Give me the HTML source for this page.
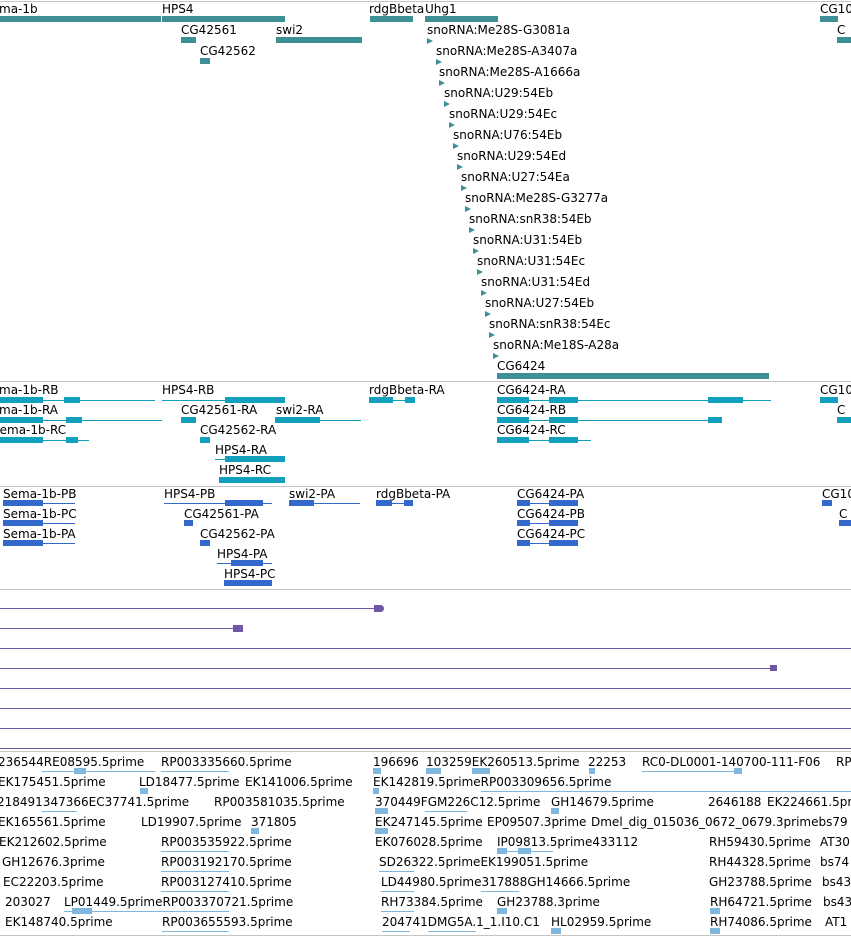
<!DOCTYPE html>
<html><head><meta charset="utf-8"><style>
body{margin:0;width:851px;height:937px;overflow:hidden;background:#fff;position:relative;font-family:"DejaVu Sans","Liberation Sans",sans-serif}
div{position:absolute}
.t{font-size:12px;line-height:12px;color:#000;white-space:nowrap}
.s{height:1px;left:0;width:851px;background:#c4c4c4}
.g{background:#3f9096;height:6px}
.r{background:#12a0bd}
.p{background:#3369cc}
.u{background:#7057a6}
.e{background:#80b7df}
.l{height:1px}
.x{height:6px}
.tri{width:0;height:0;border-top:3px solid transparent;border-bottom:3px solid transparent;border-left:6px solid #3f9096}
</style></head><body>
<div class="s" style="top:1px"></div>
<div class="s" style="top:381px"></div>
<div class="s" style="top:486px"></div>
<div class="s" style="top:589px"></div>
<div class="s" style="top:751px"></div>
<div class="s" style="top:935px"></div>

<!-- gene track -->
<div class="t" style="left:-1px;top:3px">ma-1b</div><div class="g" style="left:0;top:16px;width:161px"></div>
<div class="t" style="left:162px;top:3px">HPS4</div><div class="g" style="left:162px;top:16px;width:123px"></div>
<div class="t" style="left:181px;top:24px">CG42561</div><div class="g" style="left:181px;top:37px;width:15px"></div>
<div class="t" style="left:200px;top:45px">CG42562</div><div class="g" style="left:200px;top:58px;width:10px"></div>
<div class="t" style="left:276px;top:24px">swi2</div><div class="g" style="left:276px;top:37px;width:86px"></div>
<div class="t" style="left:369px;top:3px">rdgBbeta</div><div class="g" style="left:370px;top:16px;width:43px"></div>
<div class="t" style="left:425px;top:3px">Uhg1</div><div class="g" style="left:425px;top:16px;width:73px"></div>
<div class="t" style="left:820px;top:3px">CG10</div><div class="g" style="left:820px;top:16px;width:18px"></div>
<div class="t" style="left:837px;top:24px">C</div><div class="g" style="left:837px;top:37px;width:14px"></div>

<div class="t" style="left:427px;top:24px">snoRNA:Me28S-G3081a</div><div class="tri" style="left:427px;top:38px"></div>
<div class="t" style="left:436px;top:45px">snoRNA:Me28S-A3407a</div><div class="tri" style="left:436px;top:59px"></div>
<div class="t" style="left:439px;top:66px">snoRNA:Me28S-A1666a</div><div class="tri" style="left:439px;top:80px"></div>
<div class="t" style="left:444px;top:87px">snoRNA:U29:54Eb</div><div class="tri" style="left:444px;top:101px"></div>
<div class="t" style="left:449px;top:108px">snoRNA:U29:54Ec</div><div class="tri" style="left:449px;top:122px"></div>
<div class="t" style="left:453px;top:129px">snoRNA:U76:54Eb</div><div class="tri" style="left:453px;top:143px"></div>
<div class="t" style="left:457px;top:150px">snoRNA:U29:54Ed</div><div class="tri" style="left:457px;top:164px"></div>
<div class="t" style="left:461px;top:171px">snoRNA:U27:54Ea</div><div class="tri" style="left:461px;top:185px"></div>
<div class="t" style="left:465px;top:192px">snoRNA:Me28S-G3277a</div><div class="tri" style="left:465px;top:206px"></div>
<div class="t" style="left:469px;top:213px">snoRNA:snR38:54Eb</div><div class="tri" style="left:469px;top:227px"></div>
<div class="t" style="left:473px;top:234px">snoRNA:U31:54Eb</div><div class="tri" style="left:473px;top:248px"></div>
<div class="t" style="left:477px;top:255px">snoRNA:U31:54Ec</div><div class="tri" style="left:477px;top:269px"></div>
<div class="t" style="left:481px;top:276px">snoRNA:U31:54Ed</div><div class="tri" style="left:481px;top:290px"></div>
<div class="t" style="left:485px;top:297px">snoRNA:U27:54Eb</div><div class="tri" style="left:485px;top:311px"></div>
<div class="t" style="left:489px;top:318px">snoRNA:snR38:54Ec</div><div class="tri" style="left:489px;top:332px"></div>
<div class="t" style="left:493px;top:339px">snoRNA:Me18S-A28a</div><div class="tri" style="left:493px;top:353px"></div>
<div class="t" style="left:497px;top:360px">CG6424</div><div class="g" style="left:497px;top:373px;width:272px"></div>

<!-- transcripts -->
<div class="t" style="left:-1px;top:384px">ma-1b-RB</div>
<div class="r l" style="left:0;top:400px;width:155px"></div><div class="r x" style="left:0;top:397px;width:43px"></div><div class="r x" style="left:64px;top:397px;width:16px"></div>
<div class="t" style="left:162px;top:384px">HPS4-RB</div>
<div class="r l" style="left:162px;top:400px;width:63px"></div><div class="r x" style="left:225px;top:397px;width:60px"></div>
<div class="t" style="left:369px;top:384px">rdgBbeta-RA</div>
<div class="r l" style="left:369px;top:400px;width:46px"></div><div class="r x" style="left:369px;top:397px;width:24px"></div><div class="r x" style="left:405px;top:397px;width:10px"></div>
<div class="t" style="left:497px;top:384px">CG6424-RA</div>
<div class="r l" style="left:497px;top:400px;width:274px"></div><div class="r x" style="left:497px;top:397px;width:32px"></div><div class="r x" style="left:549px;top:397px;width:29px"></div><div class="r x" style="left:708px;top:397px;width:35px"></div>
<div class="t" style="left:820px;top:384px">CG10</div><div class="r x" style="left:820px;top:397px;width:18px"></div>

<div class="t" style="left:-1px;top:404px">ma-1b-RA</div>
<div class="r l" style="left:0;top:420px;width:162px"></div><div class="r x" style="left:0;top:417px;width:43px"></div><div class="r x" style="left:66px;top:417px;width:16px"></div>
<div class="t" style="left:181px;top:404px">CG42561-RA</div><div class="r x" style="left:181px;top:417px;width:15px"></div>
<div class="t" style="left:276px;top:404px">swi2-RA</div>
<div class="r l" style="left:275px;top:420px;width:86px"></div><div class="r x" style="left:275px;top:417px;width:45px"></div>
<div class="t" style="left:497px;top:404px">CG6424-RB</div>
<div class="r l" style="left:497px;top:420px;width:225px"></div><div class="r x" style="left:497px;top:417px;width:32px"></div><div class="r x" style="left:549px;top:417px;width:29px"></div><div class="r x" style="left:708px;top:417px;width:14px"></div>
<div class="t" style="left:837px;top:404px">C</div><div class="r x" style="left:837px;top:417px;width:14px"></div>

<div class="t" style="left:-8px;top:424px">Sema-1b-RC</div>
<div class="r l" style="left:0;top:440px;width:89px"></div><div class="r x" style="left:0;top:437px;width:43px"></div><div class="r x" style="left:66px;top:437px;width:12px"></div>
<div class="t" style="left:200px;top:424px">CG42562-RA</div><div class="r x" style="left:200px;top:437px;width:10px"></div>
<div class="t" style="left:497px;top:424px">CG6424-RC</div>
<div class="r l" style="left:497px;top:440px;width:94px"></div><div class="r x" style="left:497px;top:437px;width:32px"></div><div class="r x" style="left:549px;top:437px;width:29px"></div>

<div class="t" style="left:215px;top:444px">HPS4-RA</div>
<div class="r l" style="left:215px;top:459px;width:70px"></div><div class="r x" style="left:225px;top:456px;width:60px"></div>
<div class="t" style="left:219px;top:464px">HPS4-RC</div>
<div class="r x" style="left:219px;top:477px;width:66px"></div>

<!-- proteins -->
<div class="t" style="left:3px;top:488px">Sema-1b-PB</div>
<div class="p l" style="left:3px;top:503px;width:72px"></div><div class="p x" style="left:3px;top:500px;width:40px"></div>
<div class="t" style="left:164px;top:488px">HPS4-PB</div>
<div class="p l" style="left:164px;top:503px;width:108px"></div><div class="p x" style="left:225px;top:500px;width:38px"></div>
<div class="t" style="left:289px;top:488px">swi2-PA</div>
<div class="p l" style="left:289px;top:503px;width:71px"></div><div class="p x" style="left:289px;top:500px;width:25px"></div>
<div class="t" style="left:376px;top:488px">rdgBbeta-PA</div>
<div class="p l" style="left:376px;top:503px;width:37px"></div><div class="p x" style="left:376px;top:500px;width:16px"></div><div class="p x" style="left:404px;top:500px;width:9px"></div>
<div class="t" style="left:517px;top:488px">CG6424-PA</div>
<div class="p l" style="left:517px;top:503px;width:61px"></div><div class="p x" style="left:517px;top:500px;width:13px"></div><div class="p x" style="left:549px;top:500px;width:29px"></div>
<div class="t" style="left:822px;top:488px">CG10</div><div class="p x" style="left:822px;top:500px;width:10px"></div>

<div class="t" style="left:3px;top:508px">Sema-1b-PC</div>
<div class="p l" style="left:3px;top:523px;width:72px"></div><div class="p x" style="left:3px;top:520px;width:40px"></div>
<div class="t" style="left:184px;top:508px">CG42561-PA</div><div class="p x" style="left:184px;top:520px;width:9px"></div>
<div class="t" style="left:517px;top:508px">CG6424-PB</div>
<div class="p l" style="left:517px;top:523px;width:61px"></div><div class="p x" style="left:517px;top:520px;width:13px"></div><div class="p x" style="left:549px;top:520px;width:29px"></div>
<div class="t" style="left:839px;top:508px">C</div><div class="p x" style="left:839px;top:520px;width:12px"></div>

<div class="t" style="left:3px;top:528px">Sema-1b-PA</div>
<div class="p l" style="left:3px;top:543px;width:72px"></div><div class="p x" style="left:3px;top:540px;width:40px"></div>
<div class="t" style="left:200px;top:528px">CG42562-PA</div><div class="p x" style="left:200px;top:540px;width:10px"></div>
<div class="t" style="left:517px;top:528px">CG6424-PC</div>
<div class="p l" style="left:517px;top:543px;width:61px"></div><div class="p x" style="left:517px;top:540px;width:13px"></div><div class="p x" style="left:549px;top:540px;width:29px"></div>

<div class="t" style="left:217px;top:548px">HPS4-PA</div>
<div class="p l" style="left:217px;top:563px;width:55px"></div><div class="p x" style="left:231px;top:560px;width:32px"></div>
<div class="t" style="left:224px;top:568px">HPS4-PC</div>
<div class="p x" style="left:224px;top:580px;width:48px"></div>

<!-- purple -->
<div class="u l" style="left:0;top:608px;width:380px"></div><div class="u" style="left:374px;top:605px;width:10px;height:7px;border-radius:0 4px 4px 0"></div>
<div class="u l" style="left:0;top:628px;width:240px"></div><div class="u" style="left:233px;top:625px;width:10px;height:7px"></div>
<div class="u l" style="left:0;top:648px;width:851px"></div>
<div class="u l" style="left:0;top:668px;width:776px"></div><div class="u" style="left:770px;top:665px;width:7px;height:6px"></div>
<div class="u l" style="left:0;top:688px;width:851px"></div>
<div class="u l" style="left:0;top:708px;width:851px"></div>
<div class="u l" style="left:0;top:728px;width:851px"></div>
<div class="u l" style="left:0;top:748px;width:851px"></div>

<!-- ESTs -->
<div class="t" style="left:-2px;top:756px">236544RE08595.5prime</div>
<div class="t" style="left:161px;top:756px">RP003335660.5prime</div>
<div class="t" style="left:373px;top:756px">196696</div>
<div class="t" style="left:426px;top:756px">103259EK260513.5prime</div>
<div class="t" style="left:588px;top:756px">22253</div>
<div class="t" style="left:642px;top:756px">RC0-DL0001-140700-111-F06</div>
<div class="t" style="left:836px;top:756px">RP</div>
<div class="e l" style="left:42px;top:771px;width:113px"></div><div class="e x" style="left:74px;top:768px;width:12px"></div>
<div class="e l" style="left:161px;top:771px;width:68px"></div>
<div class="e x" style="left:373px;top:768px;width:8px"></div><div class="e x" style="left:426px;top:768px;width:15px"></div><div class="e x" style="left:472px;top:768px;width:18px"></div>
<div class="e x" style="left:589px;top:768px;width:6px"></div>
<div class="e l" style="left:642px;top:771px;width:100px"></div><div class="e x" style="left:734px;top:768px;width:8px"></div>

<div class="t" style="left:-2px;top:776px">EK175451.5prime</div>
<div class="t" style="left:139px;top:776px">LD18477.5prime</div>
<div class="t" style="left:245px;top:776px">EK141006.5prime</div>
<div class="t" style="left:373px;top:776px">EK142819.5primeRP003309656.5prime</div>
<div class="e x" style="left:140px;top:788px;width:8px"></div><div class="e x" style="left:373px;top:788px;width:6px"></div>
<div class="e l" style="left:481px;top:791px;width:370px"></div>

<div class="t" style="left:-3px;top:796px">218491347366EC37741.5prime</div>
<div class="t" style="left:214px;top:796px">RP003581035.5prime</div>
<div class="t" style="left:375px;top:796px">370449FGM226C12.5prime</div>
<div class="t" style="left:551px;top:796px">GH14679.5prime</div>
<div class="t" style="left:708px;top:796px">2646188</div>
<div class="t" style="left:767px;top:796px">EK224661.5prime</div>
<div class="e l" style="left:42px;top:811px;width:35px"></div><div class="e x" style="left:375px;top:808px;width:13px"></div><div class="e l" style="left:425px;top:811px;width:42px"></div><div class="e x" style="left:551px;top:808px;width:8px"></div>

<div class="t" style="left:-2px;top:816px">EK165561.5prime</div>
<div class="t" style="left:141px;top:816px">LD19907.5prime</div>
<div class="t" style="left:251px;top:816px">371805</div>
<div class="t" style="left:375px;top:816px">EK247145.5prime</div>
<div class="t" style="left:487px;top:816px">EP09507.3prime</div>
<div class="t" style="left:591px;top:816px">Dmel_dig_015036_0672_0679.3primebs79</div>
<div class="e x" style="left:251px;top:828px;width:8px"></div><div class="e x" style="left:375px;top:828px;width:13px"></div>

<div class="t" style="left:-1px;top:836px">EK212602.5prime</div>
<div class="t" style="left:161px;top:836px">RP003535922.5prime</div>
<div class="t" style="left:375px;top:836px">EK076028.5prime</div>
<div class="t" style="left:497px;top:836px">IP09813.5prime433112</div>
<div class="t" style="left:709px;top:836px">RH59430.5prime</div>
<div class="t" style="left:820px;top:836px">AT30</div>
<div class="e l" style="left:161px;top:851px;width:68px"></div><div class="e l" style="left:497px;top:851px;width:56px"></div><div class="e x" style="left:497px;top:848px;width:10px"></div><div class="e x" style="left:518px;top:848px;width:13px"></div>

<div class="t" style="left:2px;top:856px">GH12676.3prime</div>
<div class="t" style="left:161px;top:856px">RP003192170.5prime</div>
<div class="t" style="left:379px;top:856px">SD26322.5primeEK199051.5prime</div>
<div class="t" style="left:709px;top:856px">RH44328.5prime</div>
<div class="t" style="left:820px;top:856px">bs74</div>
<div class="e l" style="left:161px;top:871px;width:68px"></div><div class="e l" style="left:379px;top:871px;width:35px"></div>

<div class="t" style="left:3px;top:876px">EC22203.5prime</div>
<div class="t" style="left:161px;top:876px">RP003127410.5prime</div>
<div class="t" style="left:381px;top:876px">LD44980.5prime317888GH14666.5prime</div>
<div class="t" style="left:709px;top:876px">GH23788.5prime</div>
<div class="t" style="left:822px;top:876px">bs43</div>
<div class="e l" style="left:161px;top:891px;width:68px"></div><div class="e l" style="left:381px;top:891px;width:33px"></div><div class="e l" style="left:481px;top:891px;width:38px"></div>

<div class="t" style="left:5px;top:896px">203027</div>
<div class="t" style="left:64px;top:896px">LP01449.5primeRP003370721.5prime</div>
<div class="t" style="left:381px;top:896px">RH73384.5prime</div>
<div class="t" style="left:497px;top:896px">GH23788.3prime</div>
<div class="t" style="left:710px;top:896px">RH64721.5prime</div>
<div class="t" style="left:823px;top:896px">bs43</div>
<div class="e l" style="left:64px;top:911px;width:165px"></div><div class="e x" style="left:72px;top:908px;width:20px"></div><div class="e l" style="left:381px;top:911px;width:33px"></div><div class="e x" style="left:497px;top:908px;width:10px"></div><div class="e x" style="left:710px;top:908px;width:10px"></div>

<div class="t" style="left:5px;top:916px">EK148740.5prime</div>
<div class="t" style="left:162px;top:916px">RP003655593.5prime</div>
<div class="t" style="left:382px;top:916px">204741DMG5A.1_1.I10.C1</div>
<div class="t" style="left:551px;top:916px">HL02959.5prime</div>
<div class="t" style="left:710px;top:916px">RH74086.5prime</div>
<div class="t" style="left:825px;top:916px">AT1</div>
<div class="e l" style="left:162px;top:931px;width:67px"></div><div class="e l" style="left:382px;top:931px;width:28px"></div><div class="e l" style="left:428px;top:931px;width:48px"></div><div class="e x" style="left:551px;top:928px;width:10px"></div><div class="e x" style="left:710px;top:928px;width:10px"></div>
</body></html>
